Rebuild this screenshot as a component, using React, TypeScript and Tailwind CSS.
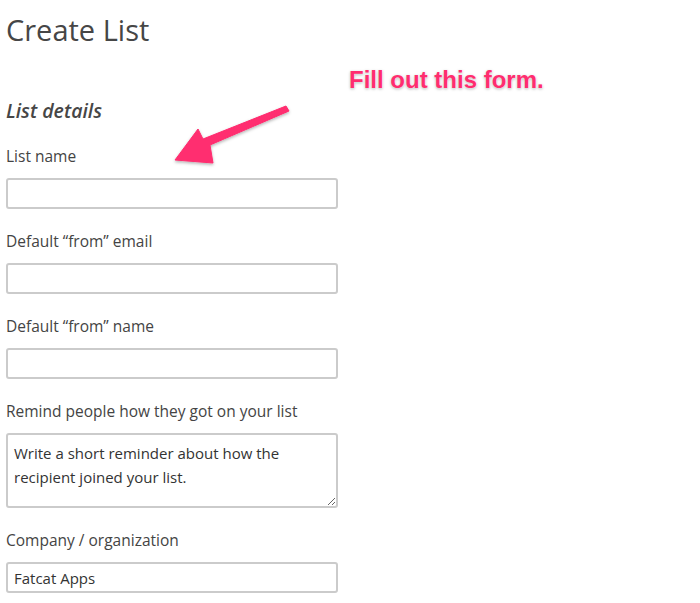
import React from 'react';

const fieldClass =
  'block w-[332px] h-[31px] border-2 border-[#cbcbcb] rounded-[3px] bg-white px-[6px] text-[15px] text-[#333] outline-none';

function Field({ label, children }: { label: string; children: React.ReactNode }) {
  return (
    <div className="mb-[22px]">
      <label className="block text-[15.5px] leading-[20px] text-[#444] mb-[12px]">{label}</label>
      {children}
    </div>
  );
}

export default function App() {
  return (
    <div
      className="relative w-[700px] h-[603px] overflow-hidden bg-white pl-[6px]"
      style={{ fontFamily: '"Open Sans", sans-serif' }}
    >
      <h1 className="mt-[10px] text-[29px] leading-[40px] text-[#464646]">Create List</h1>
      <h2 className="mt-[47px] text-[19.5px] leading-[28px] italic font-semibold text-[#464646]">
        List details
      </h2>

      <div className="mt-[21px]">
        <Field label="List name">
          <input className={fieldClass} />
        </Field>
        <Field label="Default “from” email">
          <input className={fieldClass} />
        </Field>
        <Field label="Default “from” name">
          <input className={fieldClass} />
        </Field>
        <Field label="Remind people how they got on your list">
          <textarea
            className="block w-[332px] h-[75px] border-2 border-[#cbcbcb] rounded-[3px] bg-white px-[6px] py-[6px] text-[15px] leading-[24px] text-[#333] outline-none resize-y"
            defaultValue="Write a short reminder about how the recipient joined your list."
          />
        </Field>
        <Field label="Company / organization">
          <input className={fieldClass} defaultValue="Fatcat Apps" />
        </Field>
      </div>

      {/* annotation */}
      <div
        className="absolute left-[349px] top-[64px] text-[24px] leading-[32px] font-bold text-[#ff2d6f] [text-shadow:0_0_2px_#fff,0_1px_3px_rgba(0,0,0,0.35)]"
        style={{ fontFamily: '"Liberation Sans", Arial, sans-serif' }}
      >
        Fill out this form.
      </div>
      <svg className="absolute left-0 top-0" width="700" height="603" viewBox="0 0 700 603">
        <defs>
          <filter id="sh" x="-20%" y="-20%" width="140%" height="160%">
            <feDropShadow dx="0" dy="1.5" stdDeviation="1.5" floodColor="#000" floodOpacity="0.3" />
          </filter>
        </defs>
        <path
          d="M286 106 L289 111 L210 145 L213 163 L175 160 L198 129 L203 139 Z"
          fill="#ff2d6f"
          stroke="#ff2d6f"
          strokeWidth="1"
          strokeLinejoin="round"
          filter="url(#sh)"
        />
      </svg>
    </div>
  );
}
